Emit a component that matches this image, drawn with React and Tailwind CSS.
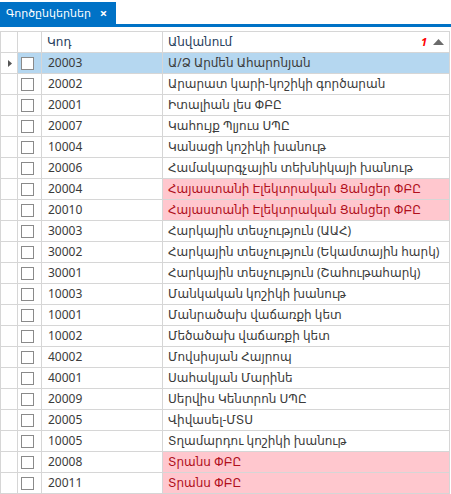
import React from 'react'

// Գործընկերների ցանկ (grid)
const rows = [
  { code: '20003', name: 'Ա/Ձ Արմեն Ահարոնյան', selected: true },
  { code: '20002', name: 'Արարատ կարի-կոշիկի գործարան' },
  { code: '20001', name: 'Իտալիան լես ՓԲԸ' },
  { code: '20007', name: 'Կահույք Պլյուս ՍՊԸ' },
  { code: '10004', name: 'Կանացի կոշիկի խանութ' },
  { code: '20006', name: 'Համակարգչային տեխնիկայի խանութ' },
  { code: '20004', name: 'Հայաստանի Էլեկտրական Ցանցեր ՓԲԸ', warn: true },
  { code: '20010', name: 'Հայաստանի Էլեկտրական Ցանցեր ՓԲԸ', warn: true },
  { code: '30003', name: 'Հարկային տեսչություն (ԱԱՀ)' },
  { code: '30002', name: 'Հարկային տեսչություն (Եկամտային հարկ)' },
  { code: '30001', name: 'Հարկային տեսչություն (Շահութահարկ)' },
  { code: '10003', name: 'Մանկական կոշիկի խանութ' },
  { code: '10001', name: 'Մանրածախ վաճառքի կետ' },
  { code: '10002', name: 'Մեծածախ վաճառքի կետ' },
  { code: '40002', name: 'Մովսիսյան Հայրոպ' },
  { code: '40001', name: 'Սահակյան Մարինե' },
  { code: '20009', name: 'Սերվիս Կենտրոն ՍՊԸ' },
  { code: '20005', name: 'Վիվասել-ՄՏՍ' },
  { code: '10005', name: 'Տղամարդու կոշիկի խանութ' },
  { code: '20008', name: 'Տրանս ՓԲԸ', warn: true },
  { code: '20011', name: 'Տրանս ՓԲԸ', warn: true },
]

const Checkbox = () => (
  <div className="w-[13px] h-[13px] border border-[#8a8a8a] bg-white" />
)

const App = () => {
  return (
    <div
      className="w-[451px] h-[494px] bg-white overflow-hidden text-[12px]"
      style={{ fontFamily: '"Noto Sans", "DejaVu Sans", sans-serif' }}
    >
      {/* Ներդիր */}
      <div className="h-[27px] flex flex-col">
        <div className="flex h-[24px] pt-[2px]">
          <div className="w-[116px] bg-[#0072c6] text-white flex items-center pl-[6px] gap-[9px]">
            <span className="text-[11px]">Գործընկերներ</span>
            <span className="text-[13px] font-bold leading-none">×</span>
          </div>
        </div>
        <div className="h-[3px] bg-[#0072c6]" />
      </div>

      {/* Աղյուսակ */}
      <div className="mt-[4px] w-[450px] border-l border-[#d6d6d6]">
        <div className="flex h-[22px] border-t border-b border-[#d6d6d6] text-[#27405e]">
          <div className="w-[17px] border-r border-[#d6d6d6]" />
          <div className="w-[24px] border-r border-[#d6d6d6]" />
          <div className="w-[121px] border-r border-[#d6d6d6] flex items-center pl-[5px]">Կոդ</div>
          <div className="w-[287px] border-r border-[#d6d6d6] flex items-center pl-[5px]">
            <span className="flex-1">Անվանում</span>
            <span className="text-[#ff0000] font-bold italic text-[11px] mr-[6px]">1</span>
            <svg width="11" height="6" viewBox="0 0 11 6" className="mr-[5px]">
              <path d="M0 6 L5.5 0 L11 6 Z" fill="#6b6b6b" />
            </svg>
          </div>
        </div>

        {rows.map((row) => (
          <div key={row.code} className="flex h-[21px] border-b border-[#d6d6d6] text-[#3b3b3b]">
            <div className="w-[17px] border-r border-[#d6d6d6] flex items-center pl-[7px]">
              {row.selected && (
                <svg width="4" height="7" viewBox="0 0 4 7">
                  <path d="M0 0 L4 3.5 L0 7 Z" fill="#555" />
                </svg>
              )}
            </div>
            <div className={`w-[24px] border-r border-[#d6d6d6] flex items-center pl-[3px] ${row.selected ? 'bg-[#b5d7f0]' : ''}`}>
              <Checkbox />
            </div>
            <div className={`w-[121px] border-r border-[#d6d6d6] flex items-center pl-[6px] ${row.selected ? 'bg-[#b5d7f0]' : ''}`}>
              {row.code}
            </div>
            <div
              className={`w-[287px] border-r border-[#d6d6d6] flex items-center pl-[5px] whitespace-nowrap overflow-hidden ${
                row.selected ? 'bg-[#b5d7f0]' : row.warn ? 'bg-[#ffc7ce] text-[#b0101c]' : ''
              }`}
            >
              {row.name}
            </div>
          </div>
        ))}
      </div>
    </div>
  )
}

export default App
